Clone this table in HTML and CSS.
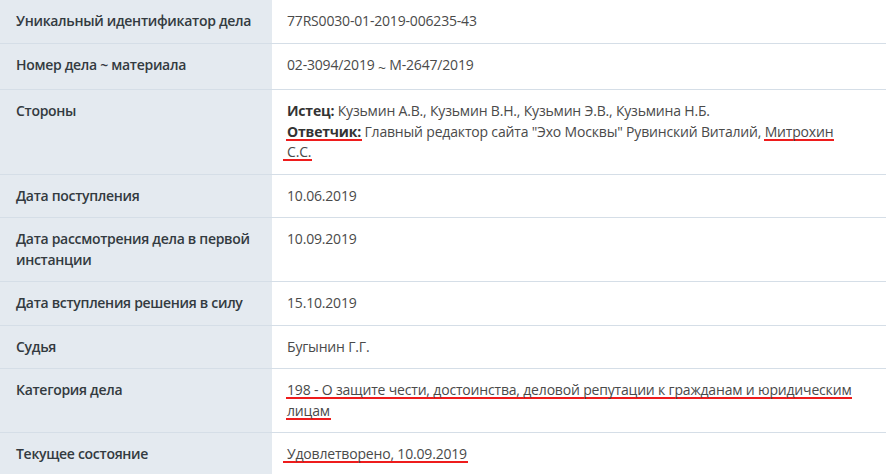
FILE: index.html
```html
<!DOCTYPE html>
<html lang="ru">
<head>
<meta charset="utf-8">
<title>Дело 02-3094/2019</title>
<link rel="stylesheet" href="styles.css">
</head>
<body>
<div class="case">
  <div class="row">
    <div class="label">Уникальный идентификатор дела</div>
    <div class="value">77RS0030-01-2019-006235-43</div>
  </div>
  <div class="row">
    <div class="label">Номер дела ~ материала</div>
    <div class="value">02-3094/2019 <span class="tilde">~</span> М-2647/2019</div>
  </div>
  <div class="row">
    <div class="label">Стороны</div>
    <div class="value">
      <div><b>Истец:</b> Кузьмин А.В., Кузьмин В.Н., Кузьмин Э.В., Кузьмина Н.Б.</div>
      <div><b class="mark">Ответчик:</b> Главный редактор сайта "Эхо Москвы" Рувинский Виталий, <span class="mark">Митрохин</span><br><span class="mark wide">С.С.</span></div>
    </div>
  </div>
  <div class="row">
    <div class="label">Дата поступления</div>
    <div class="value">10.06.2019</div>
  </div>
  <div class="row">
    <div class="label">Дата рассмотрения дела в первой инстанции</div>
    <div class="value">10.09.2019</div>
  </div>
  <div class="row">
    <div class="label">Дата вступления решения в силу</div>
    <div class="value">15.10.2019</div>
  </div>
  <div class="row">
    <div class="label">Судья</div>
    <div class="value">Бугынин Г.Г.</div>
  </div>
  <div class="row">
    <div class="label">Категория дела</div>
    <div class="value"><span class="mark">198 - О защите чести, достоинства, деловой репутации к гражданам и юридическим</span><br><span class="mark">лицам</span></div>
  </div>
  <div class="row">
    <div class="label">Текущее состояние</div>
    <div class="value"><span class="mark wide">Удовлетворено, 10.09.2019</span></div>
  </div>
</div>
</body>
</html>
```

FILE: styles.css
```css
html, body {
  margin: 0;
  padding: 0;
  background: #ffffff;
}

body {
  font-family: "Open Sans", "Noto Sans", "Liberation Sans", sans-serif;
  font-size: 14px;
  line-height: 20.5px;
}

.case {
  display: flex;
  flex-direction: column;
}

.row {
  display: grid;
  grid-template-columns: 272px 1fr;
  border-bottom: 1px solid #d5dee7;
}

.label {
  background: #e4eaf0;
  color: #333a40;
  font-weight: 600;
  letter-spacing: -0.3px;
  padding: 11px 12px 11px 16px;
}

.value {
  background: #ffffff;
  color: #4a4a4a;
  letter-spacing: -0.18px;
  padding: 11px 10px 11px 15px;
  white-space: nowrap;
}

.value b {
  font-weight: 700;
  color: #333333;
}

.tilde {
  display: inline-block;
  vertical-align: -3px;
}

.mark {
  padding: 0 1px;
  margin: 0 -1px;
  background-image: linear-gradient(#ee1c1c, #ee1c1c);
  background-repeat: no-repeat;
  background-position: left bottom;
  background-size: 100% 2px;
}

.mark.wide {
  padding-left: 4px;
  margin-left: -4px;
}
```
